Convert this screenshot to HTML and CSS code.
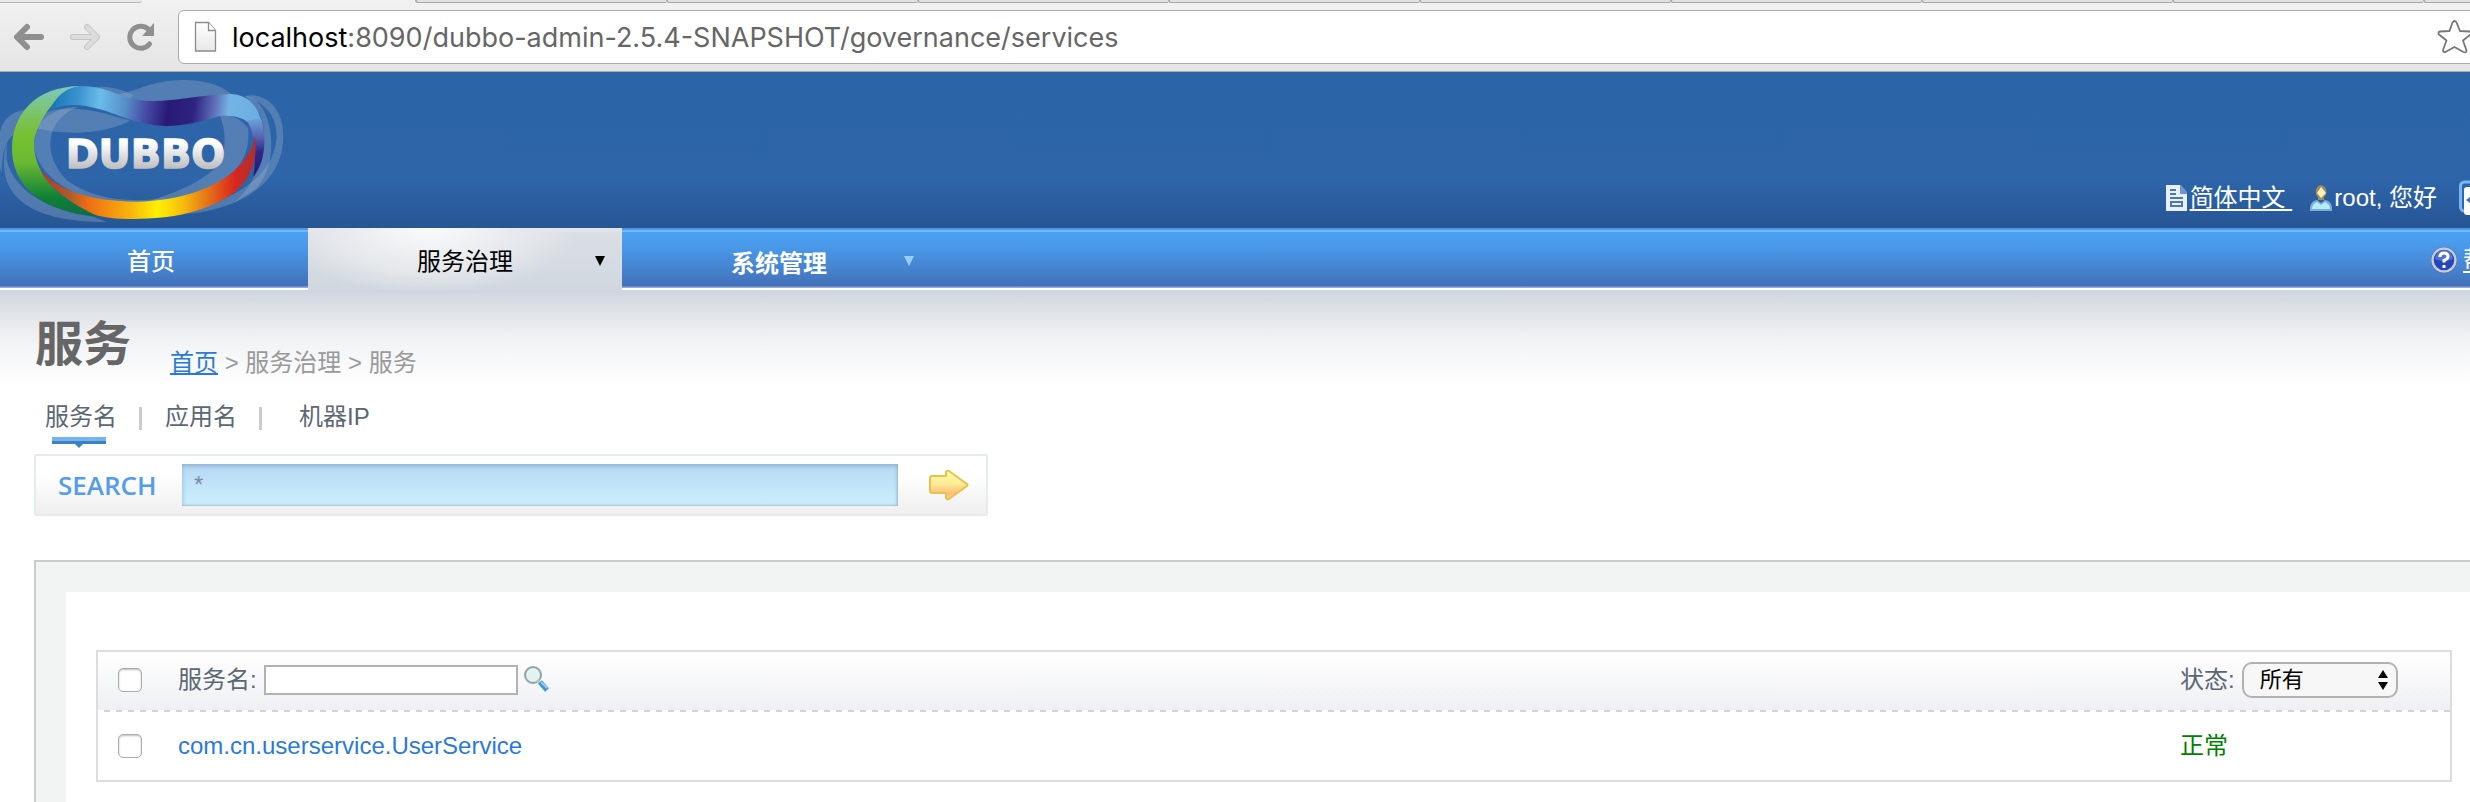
FILE: index.html
```html
<!DOCTYPE html>
<html lang="zh-CN">
<head>
<meta charset="utf-8">
<title>服务</title>
<link rel="stylesheet" href="styles.css">
</head>
<body>
<div class="browser">
  <div class="tab-strip">
    <i class="strip-first"></i><i class="strip-active"></i>
    <i class="strip-tab"></i><i class="strip-tab"></i><i class="strip-tab"></i><i class="strip-tab"></i><i class="strip-tab"></i><i class="strip-tab"></i><i class="strip-tab"></i><i class="strip-tab"></i><i class="strip-tab"></i>
  </div>
  <div class="toolbar">
    <button class="tool" aria-label="Back"><svg width="32" height="32" viewBox="0 0 32 32" fill="none" stroke="#8f8f8f" stroke-width="6" stroke-linecap="round" stroke-linejoin="round"><path d="M14 6 4 16l10 10M5 16h23"/></svg></button>
    <button class="tool" aria-label="Forward"><svg width="32" height="32" viewBox="0 0 32 32" fill="none" stroke-linecap="round" stroke-linejoin="round"><path stroke="#c6c6c6" stroke-width="6" d="m18 6 10 10-10 10M27 16H4"/><path stroke="#dcdcdc" stroke-width="4" d="m18 6 10 10-10 10M27 16H4"/></svg></button>
    <button class="tool" aria-label="Reload"><svg width="32" height="32" viewBox="0 0 32 32"><path fill="none" stroke="#8f8f8f" stroke-width="5" stroke-linecap="round" d="M24.500 23A11 11 0 1 1 23 8"/><path fill="#8f8f8f" d="M29 2v13H17z"/></svg></button>
    <div class="omnibox">
      <svg class="page-icon" width="24" height="32" viewBox="0 0 24 32"><defs><linearGradient id="pg" x2="0" y2="1"><stop stop-color="#fff"/><stop offset="1" stop-color="#e8e8ea"/></linearGradient></defs><path fill="url(#pg)" stroke="#8c8c8c" stroke-width="1.300" d="M1.500 1.500h13l7 8v20.500h-20z"/><path fill="#fff" stroke="#8c8c8c" stroke-width="1.300" d="M14.500 1.500v8h7"/></svg>
      <div class="url"><span class="host">localhost</span>:8090/dubbo-admin-2.5.4-SNAPSHOT/governance/services</div>
      <svg class="star" width="36" height="36" viewBox="0 0 36 36"><path fill="none" stroke="#777" stroke-width="1.800" stroke-linejoin="round" d="M15.500 3.500q2-3 4 0L23 12l10 .500q2.500 1 .500 3L26 21.500l3.500 10q0 2.500-3 1.500L17.500 28l-9 5q-2.500.500-2.500-2l3.500-9.500L2 15.500q-1.500-2.500 1-3L12.500 12z"/></svg>
    </div>
  </div>
</div>

<header class="header">
  <svg class="logo" width="300" height="156" viewBox="0 36 900 468" role="img" aria-label="DUBBO">
    <defs>
      <linearGradient id="green" gradientUnits="userSpaceOnUse" x1="180" y1="78" x2="180" y2="472"><stop stop-color="#7cc9c0"/><stop offset=".25" stop-color="#7cc25a"/><stop offset=".38" stop-color="#76c030"/><stop offset=".58" stop-color="#6cb933"/><stop offset=".85" stop-color="#0f8035"/><stop offset="1" stop-color="#0b6d48"/></linearGradient>
      <linearGradient id="blue" gradientUnits="userSpaceOnUse" x1="150" y1="170" x2="790" y2="250"><stop stop-color="#1b76b5"/><stop offset=".12" stop-color="#3c93cf"/><stop offset=".22" stop-color="#6abde9"/><stop offset=".34" stop-color="#568fcb"/><stop offset=".45" stop-color="#4345a0"/><stop offset=".54" stop-color="#291976"/><stop offset=".66" stop-color="#2d2480"/><stop offset=".76" stop-color="#6275bd"/><stop offset=".82" stop-color="#72b4e4"/><stop offset="1" stop-color="#69aee2"/></linearGradient>
      <linearGradient id="tail" gradientUnits="userSpaceOnUse" x1="0" y1="165" x2="0" y2="350"><stop stop-color="#6cb0e3"/><stop offset=".35" stop-color="#5866b4"/><stop offset=".6" stop-color="#2f2788"/><stop offset="1" stop-color="#291976"/></linearGradient>
      <linearGradient id="warm" gradientUnits="userSpaceOnUse" x1="120" y1="0" x2="770" y2="0"><stop stop-color="#d9281d"/><stop offset=".13" stop-color="#a95b2b"/><stop offset=".22" stop-color="#ee6c14"/><stop offset=".42" stop-color="#f9b60b"/><stop offset=".54" stop-color="#fff000"/><stop offset=".65" stop-color="#f7c20c"/><stop offset=".76" stop-color="#e67b17"/><stop offset=".9" stop-color="#d9261d"/><stop offset="1" stop-color="#a93036"/></linearGradient>
      <linearGradient id="metal" x2="0" y2="1"><stop offset=".25" stop-color="#fff"/><stop offset=".8" stop-color="#bfbfc2"/></linearGradient>
    </defs>
    <g fill="#a4b7cc" fill-opacity=".32">
      <path d="M340 105C420 95 440 62 550 60 650 60 690 95 720 125L480 132 340 110z"/>
      <path d="M260 85Q330 70 400 105L390 118 300 100z"/>
      <path d="M735 108C800 95 850 150 850 225 850 390 690 450 560 462L640 430C770 380 825 310 830 230 830 170 800 130 735 108z"/>
      <path d="M75 150C25 155-5 190-5 260-5 300 0 330 5 340 5 290 15 240 40 225z"/>
      <path d="M20 245C-15 390 60 485 320 486L280 470C150 450 45 400 20 300z"/>
      <path d="M110 205C100 130 250 140 330 165L390 182C310 225 190 225 110 205z"/>
      <path d="M235 140C130 180 130 290 200 360 270 415 380 430 500 415L420 440C240 440 100 350 100 240 100 190 160 140 235 140z"/>
      <path d="M660 168Q710 160 745 205 750 290 700 335 600 420 450 422 620 370 665 300 685 230 660 168z"/>
      <path d="M735 108C810 110 850 290 770 385L700 430C790 360 815 200 770 150z"/>
    </g>
    <path fill="url(#green)" d="M245 78C100 78 36 170 36 265 36 400 160 462 300 470 190 425 102 355 102 250 102 205 165 90 245 78z"/>
    <path fill="url(#blue)" d="M146 155C165 115 195 80 245 78 310 78 350 105 400 118 490 135 580 105 690 102 740 102 772 135 785 185L758 205C745 180 715 165 660 168 610 182 560 198 500 198 420 198 360 165 300 148 235 130 185 130 146 155z"/>
    <path fill="url(#tail)" d="M740 182 783 175C802 235 795 310 760 350 768 300 768 220 740 182z"/>
    <path fill="url(#warm)" d="M764 225C775 300 755 355 700 400 620 455 520 477 400 477 350 477 310 472 285 464 210 430 145 380 120 328 170 390 270 425 410 425 540 422 640 385 700 335 740 300 762 260 764 225z"/>
    <text class="logo-text" x="197" y="325" fill="url(#metal)" stroke="url(#metal)" stroke-width="4" stroke-linejoin="round">DUBBO</text>
  </svg>
  <div class="user-links">
    <svg class="doc" width="24" height="28" viewBox="0 0 24 28"><path fill="#e9effa" d="M1 1h14l7 8v18H1z"/><path fill="#7291cf" d="M15 1h1l6 7v2h-7z"/><path stroke="#4e7aa8" stroke-width="2" fill="none" d="M5 6h6M5 10h6M5 14h13M6 18h11v4H6z"/></svg>
    <a class="lang" href="#">简体中文&nbsp;</a>
    <svg class="user" width="24" height="28" viewBox="0 0 24 28"><path fill="#a78a5a" d="M12 1C6 2 5 10 9 13v3h6v-3c4-3 3-11-3-12z"/><path fill="#fff3ba" d="m12 3 5 6-5 5-4-5z"/><path fill="#78aede" d="M1 27V23q1-6 7-7l4 3 4-3q6 1 7 7v4z"/><path fill="#b6ecfb" d="M3 25q0-5 5-7l4 3 4-3q5 2 5 7z"/></svg>
    <span class="hello">root, 您好</span>
    <svg class="out" width="28" height="36" viewBox="0 0 28 36"><rect x="1.500" y="2" width="24" height="29" rx="4" fill="#2d65a8" stroke="#76b6f5" stroke-width="3"/><rect x="5" y="7" width="23" height="28" rx="3" fill="#fff"/><path d="m7 20 6-5v10z" fill="#3b78bd"/></svg>
  </div>
</header>

<nav class="nav">
  <a class="item" href="#">首页</a>
  <a class="item active" href="#">服务治理<span class="caret"></span></a>
  <a class="item system" href="#">系统管理<span class="caret"></span></a>
  <a class="help" href="#"><svg width="28" height="28" viewBox="0 0 28 28"><circle cx="14" cy="14" r="13" fill="#304a86"/><circle cx="14" cy="14" r="11.500" fill="#2348bd" stroke="#c8cad4" stroke-width="2.500"/><path fill="#5273d4" d="M5 13a9 9 0 0 1 18 0q-9 4-18 0z"/><path d="M10 11q0-4 4-4t4 3.500q0 2.500-4 4v2M14 19v3" fill="none" stroke="#fff" stroke-width="3"/></svg><span class="help-text">帮助</span></a>
</nav>

<main class="main">
  <div class="heading">
    <h1>服务</h1>
    <div class="crumbs"><a href="#">首页</a> &gt; 服务治理 &gt; 服务</div>
  </div>
  <div class="modes">
    <a class="mode current" href="#">服务名<svg class="marker" width="54" height="11" viewBox="0 0 54 11"><path fill="#72b5f4" d="M0 0h54v4H0z"/><path fill="#3f80bf" d="M0 4h54v3H31l-4 4-4-4H0z"/></svg></a>
    <i class="bar"></i>
    <a class="mode" href="#">应用名</a>
    <i class="bar"></i>
    <a class="mode ip" href="#">机器IP</a>
  </div>
  <form class="search">
    <label class="search-label" for="q">SEARCH</label>
    <input class="search-input" id="q" type="text" value="*">
    <button class="go" type="button" aria-label="Search"><svg width="40" height="32" viewBox="0 0 40 32"><defs><linearGradient id="go" x2="0" y2="1"><stop stop-color="#ffffa6"/><stop offset=".45" stop-color="#ffec94"/><stop offset=".8" stop-color="#ffbd7c"/><stop offset="1" stop-color="#ffd98a"/></linearGradient></defs><path fill="url(#go)" stroke="#e6c34e" stroke-width="2" stroke-linejoin="round" d="M1 9q0-2 2-2h14V3q1-2 3-1l18 13q1 1 0 2L20 30q-2 1-3-1v-5H3q-2 0-2-2z"/></svg></button>
  </form>
  <section class="panel">
    <div class="panel-inner">
      <table class="services">
        <thead><tr>
          <th class="pick"><input class="check" type="checkbox" aria-label="全选"></th>
          <th><div class="filter"><label for="name">服务名:</label><input class="name-input" id="name" type="text"><svg class="lens" width="28" height="28" viewBox="0 0 28 28"><circle cx="11" cy="11" r="8" fill="#e3f1f0" stroke="#8fa5a5" stroke-width="2"/><path d="m15 16 3 3" stroke="#b8c8cc" stroke-width="3"/><path d="m18 18 7 8" stroke="#4094da" stroke-width="5"/><path d="m19 18 6 6" stroke="#8dd0f5" stroke-width="2"/></svg></div></th>
          <th class="status"><div class="filter"><label for="state">状态:</label><span class="select-wrap"><select id="state"><option>所有</option></select><svg class="steps" width="10" height="20" viewBox="0 0 10 20"><path d="m5 0 5 8H0zM0 12h10l-5 8z"/></svg></span></div></th>
        </tr></thead>
        <tbody><tr>
          <td class="pick"><input class="check" type="checkbox" aria-label="com.cn.userservice.UserService"></td>
          <td><a class="service" href="#">com.cn.userservice.UserService</a></td>
          <td class="status ok">正常</td>
        </tr></tbody>
      </table>
    </div>
  </section>
</main>
</body>
</html>
```

FILE: styles.css
```css
* { box-sizing: border-box; }
html { height: 100%; overflow: hidden; }
body {
  margin: 0;
  min-height: 100%;
  display: flex;
  flex-direction: column;
  overflow: hidden;
  background: #fff;
  font: 24px/32px "Liberation Sans", "Noto Sans CJK SC", sans-serif;
  color: #5b6773;
}
button { border: 0; padding: 0; background: none; }
input, select { font: inherit; margin: 0; }
svg { display: block; flex: none; }

.browser { background: linear-gradient(#f1f1f1, #e5e5e5); border-bottom: 1px solid #a9a9a9; }
.tab-strip { display: flex; height: 3px; overflow: hidden; }
.tab-strip i { flex: none; height: 3px; }
.strip-first { width: 142px; border-bottom: 1px solid #b4b4b4; background: #e8e8e8; border-bottom-right-radius: 3px; }
.strip-active { width: 273px; }
.strip-tab { width: 251px; border-bottom: 1px solid #a8a8a8; border-left: 2px solid #aaa; background: #e0e0e0; border-bottom-left-radius: 3px; }
.toolbar { display: flex; align-items: center; gap: 24px; padding: 7px 0 7px 13px; }
.tool { width: 32px; height: 32px; }
.omnibox {
  flex: 1;
  display: flex;
  align-items: center;
  height: 54px;
  margin: 0 -8px 0 -3px;
  padding: 0 4px 0 15px;
  border: 1px solid #a9a9a9;
  border-radius: 6px;
  background: #fff;
}
.url { flex: 1; margin-left: 14px; padding-top: 2px; font: 27px/32px Inter, sans-serif; color: #666; white-space: nowrap; }
.host { color: #000; }

.header {
  display: flex;
  justify-content: space-between;
  align-items: flex-end;
  height: 156px;
  background: linear-gradient(#2c64a8, #2d65a8 70%, #28599a 92%, #275792);
  color: #fff;
}
.logo-text { font: bold 119px "DejaVu Sans", sans-serif; }
.user-links { display: flex; align-items: center; padding-bottom: 12px; margin-right: -17px; }
.user-links a { color: #fff; margin: 0 17px 0 1px; text-underline-offset: 3px; white-space: nowrap; }
.hello { margin: 0 22px 0 1px; white-space: nowrap; }

.nav {
  display: flex;
  height: 62px;
  color: #fff;
  background: linear-gradient(#4598ec 2px, #79b8f6 2px 4px, #4ca1f2 4px, #4998e8 20px, #4271b9 58px, #93abd8 59px 60px, #fff 60px);
}
.item {
  width: 308px;
  padding: 18px 0 0 127px;
  color: #fff;
  font-weight: 500;
  text-decoration: none;
  white-space: nowrap;
}
.active {
  position: relative;
  width: 314px;
  padding-left: 109px;
  color: #000;
  font-weight: 400;
  background: radial-gradient(ellipse 150px 66px at 120px 0, #fafafb, #e5e8ec 65%, transparent), linear-gradient(#e2e3ea 4px, #dadfe4 4px, #d0d7df);
}
.system { position: relative; padding: 20px 0 0 109px; font-weight: 700; }
.caret { position: absolute; left: 287px; top: 28px; border: solid transparent; border-width: 10px 5px 0; border-top-color: #000; }
.system .caret { left: 282px; border-top-color: #9acdf9; }
.help { display: flex; align-items: center; gap: 5px; margin: 0 -41px 0 auto; padding-top: 1px; color: #fff; text-decoration: none; }
.help-text { text-decoration: underline; text-underline-offset: 3px; }

.main { flex: 1; display: flex; flex-direction: column; padding-left: 34px; background: linear-gradient(#cfd5df, #dfe3e7 22px, #f0f2f4 48px, #fff 96px); }
.heading { display: flex; align-items: center; gap: 39px; height: 108px; }
h1 { margin: 0; padding: 2px 0 0 1px; font-size: 48px; line-height: 64px; font-weight: 700; color: #666; }
.crumbs { padding-top: 38px; color: #999; }
.crumbs a { color: #2a7ad7; text-underline-offset: 2px; }
.modes { display: flex; align-items: center; height: 38px; padding-left: 11px; }
.mode { position: relative; color: #5b6773; text-decoration: none; }
.marker { position: absolute; left: 7px; top: 36px; }
.bar { width: 3px; height: 23px; margin: 3px 23px 0 22px; background: #ccc; }
.ip { margin-left: 14px; }
.search {
  display: flex;
  align-items: center;
  width: 954px;
  height: 62px;
  margin-top: 18px;
  padding-left: 22px;
  border: 2px solid #e6ebef;
  border-radius: 2px;
  background: linear-gradient(#fff 30%, #efefef);
}
.search-label { width: 124px; font: 600 26px/32px "Open Sans", sans-serif; color: #559cec; }
.search-input {
  width: 716px;
  height: 42px;
  padding: 0 12px;
  border: 0;
  border-radius: 0;
  color: #7b8c9c;
  background: linear-gradient(#b5d8f4, #c7e9fb 70%, #caedf8);
  box-shadow: inset 0 2px 4px #8fb1d3, inset -1px -1px 2px #a5c8d8;
}
.go { margin-left: 31px; }
.panel { flex: 1; display: flex; margin-top: 44px; padding: 30px 0 0 30px; border: solid #c9cccc; border-width: 2px 0 0 2px; background: #f2f4f4; }
.panel-inner { flex: 1; padding: 58px 18px 0 30px; background: #fff; }

.services { width: 100%; border: 2px solid #ddd; border-collapse: separate; border-spacing: 0; table-layout: fixed; }
.services th { height: 60px; padding: 0 0 4px; font-weight: 400; text-align: left; }
.services thead tr {
  background:
    repeating-linear-gradient(90deg, #fff 0 6px, #d3d3d3 6px 12px) bottom / 100% 2px no-repeat,
    linear-gradient(#fff, #eeeff2);
}
.services td { height: 68px; padding: 0; }
.services .pick { width: 80px; padding-left: 20px; }
.services .status { width: 270px; }
.filter { display: flex; align-items: center; }
.lens { align-self: flex-start; }
.name-input { width: 254px; height: 30px; margin: 0 4px 0 7px; border: 2px solid #b2b2b2; background: #fff; }
.check {
  appearance: none;
  display: block;
  width: 24px;
  height: 24px;
  margin: 0;
  border: 1px solid #acacac;
  border-radius: 5px;
  background: #fff;
  box-shadow: inset 0 1px 2px #bbb;
}
.select-wrap { position: relative; margin-left: 7px; }
select {
  appearance: none;
  display: block;
  width: 156px;
  height: 36px;
  padding: 0 16px;
  border: 2px solid #b2b2b2;
  border-radius: 10px;
  background: #f7f7f7;
  color: #000;
  font-size: 22px;
  line-height: 30px;
}
.steps { position: absolute; right: 10px; top: 8px; pointer-events: none; }
.service { color: #2a7ad7; text-decoration: none; }
.services .ok { color: #008000; }
```
